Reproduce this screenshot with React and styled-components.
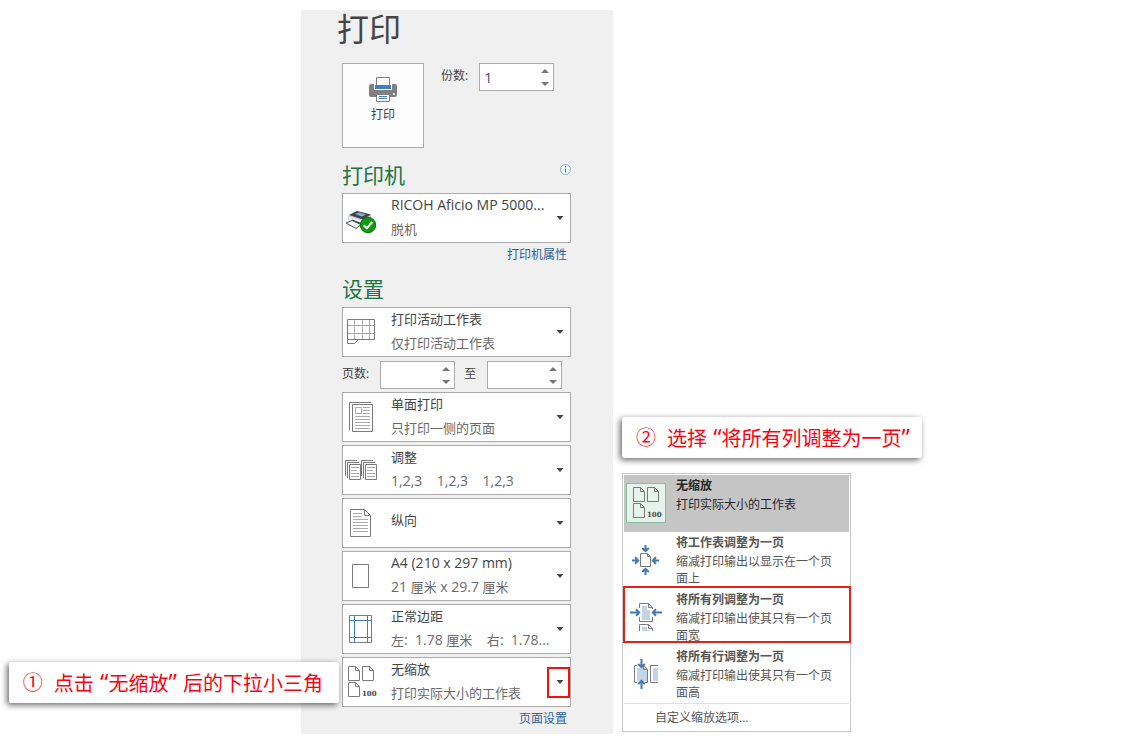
import React from 'react';
import styled, { createGlobalStyle } from 'styled-components';

const GlobalStyle = createGlobalStyle`
body {
  margin: 0;
  background: #fff;
  color: #444;
  font-family: "Open Sans", "Noto Sans CJK SC", sans-serif;
  font-size: 12px;
}
*, *::before, *::after {
  box-sizing: border-box;
}
button, input {
  font-family: inherit;
  color: inherit;
}
button {
  border: none;
  padding: 0;
  background: none;
  text-align: left;
  cursor: pointer;
}
`;

const Page = styled.main`
display: grid;
grid-template-columns: minmax(0, 301fr) minmax(300px, 312fr) minmax(302px, 512fr);
padding: 10px 0 8px;
`;

const Panel = styled.section`
grid-column: 2;
background: #f0f0f0;
padding: 0 42px 6px 36px;
`;

const Title = styled.h1`
margin: 0 0 15px;
font-size: 32px;
font-weight: 400;
line-height: 38px;
`;

const PanelBody = styled.div`
padding-left: 5px;
`;

const PrintRow = styled.div`
display: flex;
align-items: flex-start;
gap: 17px;
`;

const PrintButton = styled.button`
display: flex;
flex-direction: column;
align-items: center;
gap: 3px;
width: 82px;
height: 85px;
padding-top: 13px;
border: 1px solid #ababab;
background: #fdfdfd;
font-size: 12px;
line-height: 18px;
`;

const Field = styled.div`
display: flex;
align-items: center;
gap: 11px;
`;

const FieldLabel = styled.label`
line-height: 18px;
padding-bottom: 2px;
`;

const SpinBox = styled.div`
display: flex;
width: 75px;
height: 28px;
border: 1px solid #ababab;
background: #fff;
`;

const SpinInput = styled.input`
flex: 1;
min-width: 0;
border: none;
outline: none;
padding: 0 4px;
background: none;
color: #444488;
font-size: 14px;
`;

const SpinButtons = styled.div`
display: flex;
flex-direction: column;
width: 16px;
`;

const SpinButton = styled.button`
flex: 1;
display: flex;
align-items: center;
justify-content: center;
`;

const HeadingRow = styled.div`
display: flex;
align-items: flex-start;
justify-content: space-between;
padding: ${props => props.$space} 0 3px;
`;

const Heading = styled.h2`
margin: 0;
color: #217346;
font-size: 21px;
font-weight: 400;
line-height: 30px;
`;

const InfoButton = styled.button`
display: flex;
padding-top: 4px;
`;

const Options = styled.div`
display: flex;
flex-direction: column;
gap: 3px;
`;

const OptionWrap = styled.div`
position: relative;
`;

const OptionButton = styled.button`
display: flex;
align-items: center;
width: 100%;
height: 50px;
padding: 0 6px 0 2px;
border: 1px solid #ababab;
background: #fff;
svg {
  flex: none;
}
`;

const OptionText = styled.span`
flex: 1;
min-width: 0;
margin-left: 14px;
padding-bottom: ${props => props.$single ? '6px' : '2px'};
font-size: 13px;
line-height: 24px;
`;

const OptionLine = styled.span`
display: block;
height: 24px;
white-space: pre;
color: ${props => props.$muted ? '#6a6a6a' : '#444'};
`;

const Latin = styled.span`
font-size: ${props => props.$size};
`;

const PageRange = styled.div`
display: flex;
align-items: center;
gap: 9px;
padding-top: 1px;
`;

const PanelLink = styled.a`
display: block;
width: fit-content;
margin-left: auto;
padding: 3px 4px 0 0;
color: #2b6199;
line-height: 18px;
text-decoration: none;
`;

const ArrowMark = styled.span`
position: absolute;
top: 10px;
right: 1px;
width: 23px;
height: 31px;
border: 2px solid #f50f0f;
pointer-events: none;
`;

const Callout = styled.p`
display: flex;
align-items: center;
gap: 11px;
width: fit-content;
height: 41px;
margin: 0;
padding: 0 12px 0 14px;
border-radius: 2px;
background: #fff;
box-shadow: -2px 2px 6px rgba(0, 0, 0, 0.6);
color: #ff0010;
font-size: 20px;
line-height: 40px;
white-space: nowrap;
`;

const StepOne = styled(Callout)`
position: absolute;
top: 5px;
right: calc(100% + 3px);
padding-right: 16px;
`;

const Aside = styled.aside`
display: flex;
flex-direction: column;
justify-content: flex-end;
align-items: flex-start;
gap: 15px;
padding: 0 0 2px 9px;
`;

const Menu = styled.div`
width: 229px;
padding: 1px;
border: 1px solid #c6c6c6;
background: #fff;
`;

const MenuItem = styled.button`
position: relative;
display: flex;
align-items: flex-start;
gap: 10px;
width: 100%;
height: 57px;
padding: 1px 14px 0 2px;
background: ${props => props.$selected ? '#c5c5c5' : '#fff'};
color: ${props => props.$selected ? '#262626' : '#555'};
`;

const MenuIcon = styled.span`
flex: none;
display: flex;
margin-top: 7px;
background: ${props => props.$selected ? '#e6f3ec' : 'none'};
box-shadow: ${props => props.$selected ? 'inset 0 0 0 1px #86bfa0' : 'none'};
`;

const MenuText = styled.span`
font-size: 12px;
line-height: 17px;
strong {
  display: block;
  line-height: 20px;
}
`;

const ItemMark = styled.span`
position: absolute;
top: -3px;
right: -2px;
bottom: 3px;
left: -1px;
border: 2px solid #e2231a;
pointer-events: none;
`;

const MenuFooter = styled.button`
display: block;
width: 100%;
height: 27px;
padding-left: 31px;
border-top: 1px solid #e1e1e1;
color: #555;
font-size: 12px;
`;

const Icon = ({ size = 32, children }) => (
  <svg width={size} height={size} viewBox={`0 0 ${size} ${size}`} fill="none" stroke="#7a7a7a" overflow="visible" aria-hidden="true">
    {children}
  </svg>
);

const DownArrow = () => (
  <svg width="8" height="5" viewBox="0 0 8 5" aria-hidden="true">
    <path d="M.5 0H7.5L4 4Z" fill="#444" />
  </svg>
);

const PrintIcon = () => (
  <svg width="28" height="26" viewBox="0 0 28 26" aria-hidden="true">
    <path d="M2 7H26Q28 7 28 9V18Q28 20 26 20H2Q0 20 0 18V9Q0 7 2 7Z" fill="#808080" />
    <path d="M5 7H23V13H5Z" fill="#fff" />
    <path d="M7.5 .5H20.5V8.5H7.5Z" fill="#fff" stroke="#808080" />
    <path d="M6 8H22V12H6Z" fill="#4080bb" />
    <path d="M7.5 17.5H20.5V24.5H7.5Z" fill="#fff" stroke="#808080" />
    <path d="M10 19.5H18M10 21.5H18" stroke="#4080bb" />
    <circle cx="25" cy="17" r="1" fill="#fff" />
  </svg>
);

const InfoIcon = () => (
  <svg width="11" height="11" viewBox="0 0 11 11" fill="none" aria-hidden="true">
    <circle cx="5.5" cy="5.5" r="5" fill="#f7faff" stroke="#83a9da" />
    <path d="M5.5 2.2V3.4M5.5 4.6V8.4" stroke="#3d73bd" />
  </svg>
);

const DeviceIcon = () => (
  <Icon>
    <path d="M3 14L12 9.5L26 13V20L17 26L3 18Z" fill="#c9cfd4" stroke="none" />
    <path d="M4 13L12 9L26 12.5L18 17.5Z" fill="#3c4349" stroke="none" />
    <path d="M10 12L14 10.5L21 12.5L17 14.5Z" fill="#8db4cf" stroke="none" />
    <path d="M4 14.5L17 18.5V25L4 19.5Z" fill="#eceff1" stroke="none" />
    <path d="M7 17.5L16 21V24L7 21Z" fill="#30363b" stroke="none" />
    <path d="M1 21L7 18.5L16 22.5L11 26.5Z" fill="#f7f7f7" stroke="#4a4f54" />
    <circle cx="23" cy="23" r="7.7" fill="#109a10" stroke="#087408" />
    <path d="M18.8 23.2L21.8 26.2L27.3 20" stroke="#fff" strokeWidth="2" />
  </Icon>
);

const SheetIcon = () => (
  <Icon>
    <path d="M9.5 4V23M17.5 4V23M24.5 4V23M3 9.5H29M3 17.5H29" stroke="#ababab" />
    <path d="M2.5 3.5H29.5V23.5H2.5ZM2.5 23.5V27.5H9.5L13.5 23.5" />
  </Icon>
);

const OneSidedIcon = () => (
  <Icon>
    <path d="M4.5 29V1.5H26M7.5 3.5H27.5V30.5H7.5Z" />
    <path d="M10.5 6.5H16.5V12.5H10.5ZM18 6.5H25M18 9.5H25M18 12.5H25M10 15.5H25M10 18.5H25M10 21.5H25M10 24.5H25M10 27.5H25" stroke="#ababab" />
  </Icon>
);

const CollateIcon = () => (
  <Icon>
    {[0, 16].map(x => (
      <g key={x} transform={`translate(${x} 0)`}>
        <path d="M.5 22V6.5H12M2.5 24V8.5H14M4.5 10.5H15.5V25.5H4.5Z" />
        <path d="M6 13.5H14M6 16.5H12M6 19.5H14M6 22.5H14" stroke="#ababab" />
      </g>
    ))}
  </Icon>
);

const PortraitIcon = () => (
  <Icon>
    <path d="M5.5 2.5H19.5L25.5 8.5V29.5H5.5ZM19.5 2.5V8.5H25.5" />
    <path d="M8 6.5H17M8 9.5H17M8 12.5H23M8 15.5H23M8 18.5H23M8 21.5H23M8 24.5H23" stroke="#ababab" />
  </Icon>
);

const PaperIcon = () => (
  <Icon>
    <path d="M7.5 4.5H23.5V27.5H7.5Z" />
  </Icon>
);

const MarginsIcon = () => (
  <Icon>
    <path d="M4.5 2.5H26.5V29.5H4.5Z" />
    <path d="M9.5 3V29M22.5 3V29M5 7.5H26M5 24.5H26" stroke="#4080bb" />
  </Icon>
);

const ScalePages = () => (
  <>
    {[[3, 0], [17, 0], [3, 16]].map(([x, y]) => (
      <path key={`${x}-${y}`}
            transform={`translate(${x} ${y})`}
            d="M.5 .5H7.5L11.5 4.5V14.5H.5ZM7.5 .5V4.5H11.5" />
    ))}
    <text x="17" y="30" fill="#444" stroke="none" fontFamily="DejaVu Serif, serif" fontWeight="700" fontSize="7">100</text>
  </>
);

const ScaleIcon = () => (
  <Icon>
    <ScalePages />
  </Icon>
);

const ScaleMenuIcon = () => (
  <Icon size={40}>
    <g transform="translate(4 4)">
      <ScalePages />
    </g>
  </Icon>
);

// arrow with its tip at the origin, pointing right
const Arrow = ({ x, y, turn = 0, length = 7 }) => (
  <path transform={`translate(${x} ${y}) rotate(${turn})`}
        d={`M${-length} 0H-1M-4 -3.3L-.8 0L-4 3.3`}
        stroke="#4179b0"
        strokeWidth="2" />
);

const FitSheetIcon = () => (
  <Icon size={40}>
    <path d="M14.5 13.5H21.5L24.5 16.5V26.5H14.5ZM21.5 13.5V16.5H24.5" />
    <Arrow x={13} y={20.5} />
    <Arrow x={26} y={20.5} turn={180} />
    <Arrow x={19.5} y={12} turn={90} />
    <Arrow x={19.5} y={28} turn={-90} />
  </Icon>
);

const FitColumnsIcon = () => (
  <Icon size={40}>
    <path d="M16 9H21V13H24V23H16ZM16 30H21V33H24V34H16Z" fill="#c3d4e8" stroke="none" />
    <path d="M13.5 11V6.5H22.5L26.5 10.5V12M22.5 6.5V10.5H26.5M13.5 20V24.5H26.5V20" />
    <path d="M13.5 34V27.5H22.5L26.5 31.5V34M22.5 27.5V31.5H26.5" />
    <Arrow x={14} y={15.5} length={10} />
    <Arrow x={26} y={15.5} turn={180} length={10} />
  </Icon>
);

const FitRowsIcon = () => (
  <Icon size={40}>
    <path d="M11 14H19V17H21V27H11ZM27 14H32V27H27Z" fill="#c3d4e8" stroke="none" />
    <path d="M11 11.5H8.5V28.5H11M18 11.5L21.5 15.5V28.5H19M17.5 12V15.5H21.5M32 11.5H24.5V28.5H32" />
    <Arrow x={15.5} y={14} turn={90} length={9} />
    <Arrow x={15.5} y={26} turn={-90} length={9} />
  </Icon>
);

// Latin runs are set a little larger than the Chinese text around them
const Mixed = ({ text, size = '14px' }) => (
  text.split(/([\x20-\x7e“”]+)/).filter(Boolean).map((part, idx) => (
    /^[\x20-\x7e“”]/.test(part)
      ? <Latin key={idx} $size={size}>{part}</Latin>
      : part
  ))
);

const Spinner = ({ id, label, value = '' }) => (
  <SpinBox>
    <SpinInput id={id} type="text" aria-label={label} defaultValue={value} />
    <SpinButtons>
      <SpinButton type="button" aria-label="+">
        <svg width="8" height="4" viewBox="0 0 8 4"><path d="M0 4H8L4 0Z" fill="#777" /></svg>
      </SpinButton>
      <SpinButton type="button" aria-label="-">
        <svg width="8" height="4" viewBox="0 0 8 4"><path d="M0 0H8L4 4Z" fill="#777" /></svg>
      </SpinButton>
    </SpinButtons>
  </SpinBox>
);

const Option = ({ icon, title, detail }) => (
  <OptionButton type="button" aria-haspopup="listbox">
    {icon}
    <OptionText $single={!detail}>
      <OptionLine><Mixed text={title} /></OptionLine>
      {detail && <OptionLine $muted><Mixed text={detail} /></OptionLine>}
    </OptionText>
    <DownArrow />
  </OptionButton>
);

const settings = [
  { icon: <OneSidedIcon />, title: '单面打印', detail: '只打印一侧的页面' },
  { icon: <CollateIcon />, title: '调整', detail: '1,2,3    1,2,3    1,2,3' },
  { icon: <PortraitIcon />, title: '纵向' },
  { icon: <PaperIcon />, title: 'A4 (210 x 297 mm)', detail: '21 厘米 x 29.7 厘米' },
  { icon: <MarginsIcon />, title: '正常边距', detail: '左:  1.78 厘米    右:  1.78...' }
];

const scaling = [
  { icon: <ScaleMenuIcon />, title: '无缩放', detail: '打印实际大小的工作表', selected: true },
  { icon: <FitSheetIcon />, title: '将工作表调整为一页', detail: '缩减打印输出以显示在一个页面上' },
  { icon: <FitColumnsIcon />, title: '将所有列调整为一页', detail: '缩减打印输出使其只有一个页面宽', marked: true },
  { icon: <FitRowsIcon />, title: '将所有行调整为一页', detail: '缩减打印输出使其只有一个页面高' }
];

const App = () => (
  <>
    <GlobalStyle />
    <Page lang="zh-CN">
      <Panel>
        <Title>打印</Title>
        <PanelBody>
          <PrintRow>
            <PrintButton type="button">
              <PrintIcon />
              打印
            </PrintButton>
            <Field>
              <FieldLabel htmlFor="copies">份数:</FieldLabel>
              <Spinner id="copies" value="1" />
            </Field>
          </PrintRow>

          <HeadingRow $space="12px">
            <Heading>打印机</Heading>
            <InfoButton type="button" aria-label="i"><InfoIcon /></InfoButton>
          </HeadingRow>
          <Option icon={<DeviceIcon />} title="RICOH Aficio MP 5000..." detail="脱机" />
          <PanelLink href="#printer">打印机属性</PanelLink>

          <HeadingRow $space="10px">
            <Heading>设置</Heading>
          </HeadingRow>
          <Options>
            <Option icon={<SheetIcon />} title="打印活动工作表" detail="仅打印活动工作表" />
            <PageRange>
              <Field>
                <FieldLabel htmlFor="from">页数:</FieldLabel>
                <Spinner id="from" />
              </Field>
              <Field>
                <FieldLabel htmlFor="to">至</FieldLabel>
                <Spinner id="to" />
              </Field>
            </PageRange>
            {settings.map(setting => (
              <Option {...setting} key={setting.title} />
            ))}
            <OptionWrap>
              <Option icon={<ScaleIcon />} title="无缩放" detail="打印实际大小的工作表" />
              <ArrowMark />
              <StepOne>
                <span>①</span>
                <span><Mixed text="点击 “无缩放” 后的下拉小三角" size="24px" /></span>
              </StepOne>
            </OptionWrap>
          </Options>
          <PanelLink href="#page-setup">页面设置</PanelLink>
        </PanelBody>
      </Panel>

      <Aside>
        <Callout>
          <span>②</span>
          <span><Mixed text="选择 “将所有列调整为一页”" size="24px" /></span>
        </Callout>
        <Menu role="menu">
          {scaling.map(item => (
            <MenuItem type="button" role="menuitem" key={item.title} $selected={item.selected}>
              <MenuIcon $selected={item.selected}>{item.icon}</MenuIcon>
              <MenuText>
                <strong>{item.title}</strong>
                {item.detail}
              </MenuText>
              {item.marked && <ItemMark />}
            </MenuItem>
          ))}
          <MenuFooter type="button" role="menuitem">自定义缩放选项...</MenuFooter>
        </Menu>
      </Aside>
    </Page>
  </>
);

export default App;
